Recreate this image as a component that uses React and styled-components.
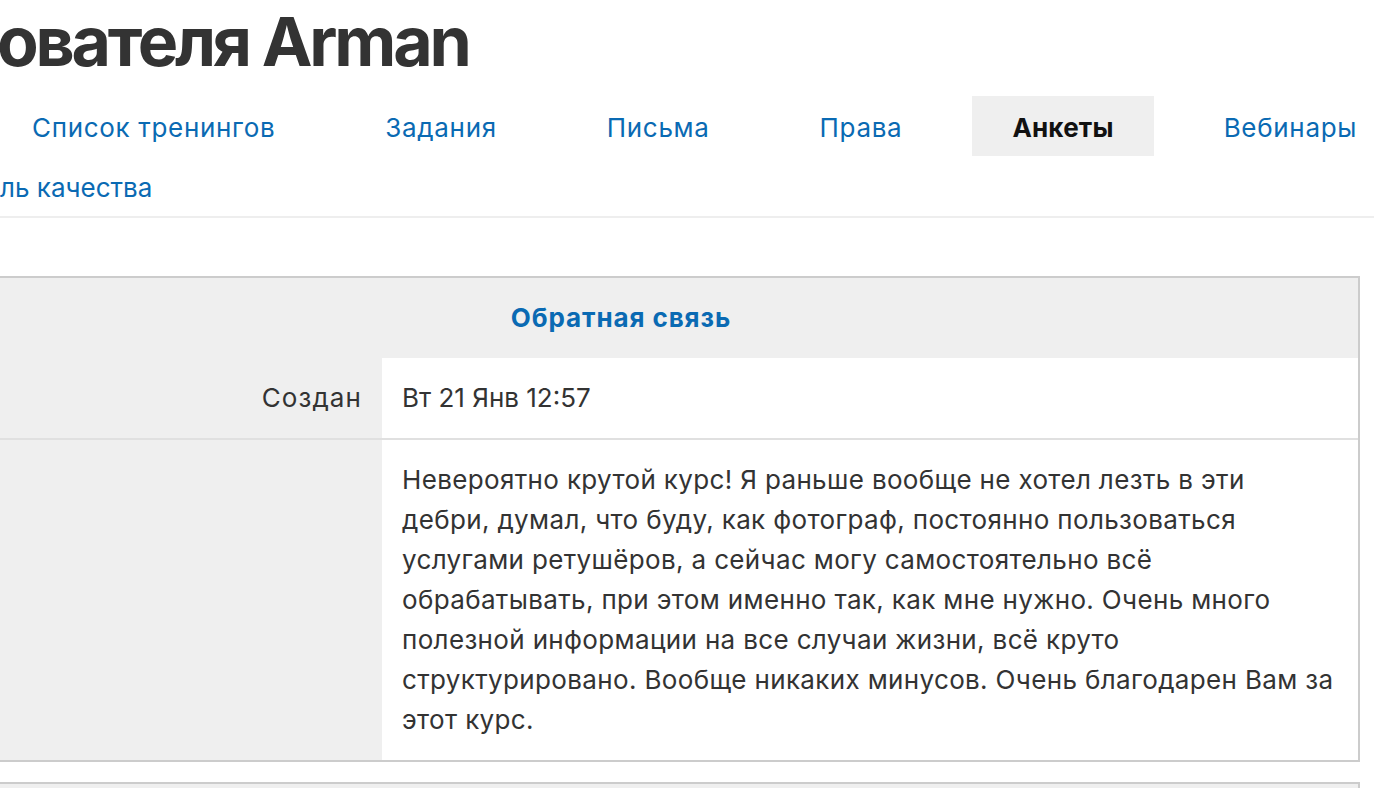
import React from 'react';
import styled, { createGlobalStyle } from 'styled-components';

const GlobalStyle = createGlobalStyle`
  html, body {
    margin: 0;
    padding: 0;
    background: #fff;
    overflow: hidden;
  }
  body {
    font-family: Inter, "Noto Sans", sans-serif;
    color: #333;
  }
  * {
    box-sizing: border-box;
  }
`;

const Page = styled.div`
  width: 1374px;
  height: 788px;
  overflow: hidden;
`;

const Title = styled.h1`
  margin: 1px 0 0 -3px;
  font-size: 68px;
  line-height: 81px;
  font-weight: 700;
  letter-spacing: -3.2px;
  color: #333;
  white-space: nowrap;
`;

const Nav = styled.ul`
  list-style: none;
  margin: 14px 0 0 -8px;
  padding: 0;
  width: 1420px;
  display: flex;
  flex-wrap: wrap;
  column-gap: 30px;
  border-bottom: 2px solid #eee;
`;

const NavItem = styled.li`
  height: 60px;
  display: flex;
  align-items: center;
  padding: ${(p) => (p.$cut ? '2px 40px 0 8px' : '2px 40px 0')};
  font-size: 26px;
  white-space: nowrap;
  letter-spacing: ${(p) => (p.$active ? '0.2px' : p.$cut ? '0' : '0.68px')};
  color: ${(p) => (p.$active ? '#111' : '#0a6ab3')};
  font-weight: ${(p) => (p.$active ? 700 : 400)};
  background: ${(p) => (p.$active ? '#efefef' : 'transparent')};
`;

const Table = styled.div`
  margin: 58px 0 0 -118px;
  width: 1478px;
  border: 2px solid #ccc;
  background: #efefef;
  font-size: 26px;
  line-height: 40px;
`;

const NextTable = styled(Table)`
  margin-top: 20px;
  height: 60px;
`;

const Caption = styled.div`
  padding: 20px;
  text-align: center;
  font-weight: 700;
  letter-spacing: 0.9px;
  color: #0a6ab3;
`;

const Row = styled.div`
  display: grid;
  grid-template-columns: 498px 1fr;
  border-bottom: ${(p) => (p.$last ? 'none' : '2px solid #e0e0e0')};
`;

const Label = styled.div`
  padding: 20px;
  text-align: right;
  letter-spacing: 1.1px;
  color: #333;
`;

const Value = styled.div`
  padding: 20px;
  background: #fff;
  color: #333;
  letter-spacing: ${(p) => (p.$tight ? '0' : '0.35px')};
`;

const Line = styled.span`
  display: block;
  white-space: nowrap;
`;

const tabs = ['Список тренингов', 'Задания', 'Письма', 'Права', 'Анкеты', 'Вебинары'];

const feedback = [
  'Невероятно крутой курс! Я раньше вообще не хотел лезть в эти',
  'дебри, думал, что буду, как фотограф, постоянно пользоваться',
  'услугами ретушёров, а сейчас могу самостоятельно всё',
  'обрабатывать, при этом именно так, как мне нужно. Очень много',
  'полезной информации на все случаи жизни, всё круто',
  'структурировано. Вообще никаких минусов. Очень благодарен Вам за',
  'этот курс.',
];

export default function App() {
  return (
    <Page>
      <GlobalStyle />
      <Title>ователя Arman</Title>
      <Nav>
        {tabs.map((t) => (
          <NavItem key={t} $active={t === 'Анкеты'}>
            {t}
          </NavItem>
        ))}
        <NavItem $cut>ль качества</NavItem>
      </Nav>
      <Table>
        <Caption>Обратная связь</Caption>
        <Row>
          <Label>Создан</Label>
          <Value $tight>Вт 21 Янв 12:57</Value>
        </Row>
        <Row $last>
          <Label />
          <Value>
            {feedback.map((line) => (
              <Line key={line}>{line}</Line>
            ))}
          </Value>
        </Row>
      </Table>
      <NextTable />
    </Page>
  );
}
